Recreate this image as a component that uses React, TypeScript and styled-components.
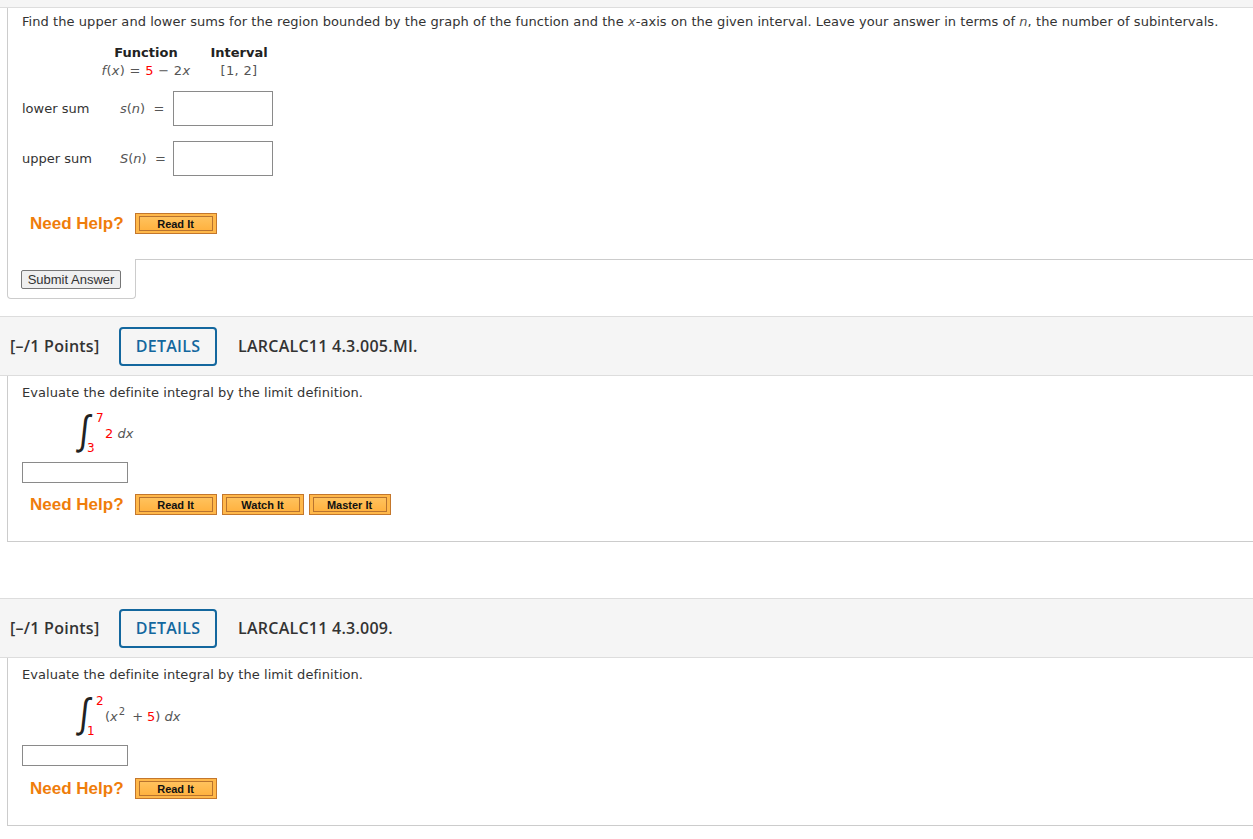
import React from "react";
import styled, { createGlobalStyle } from "styled-components";

const GlobalStyle = createGlobalStyle`
  html, body {
    margin: 0;
    padding: 0;
    background: #fff;
  }
  body {
    font-family: "DejaVu Sans", Verdana, sans-serif;
    font-size: 13px;
    color: #333;
  }
`;

const Page = styled.div`
  width: 1253px;
  display: flex;
  flex-direction: column;
`;

const TopStrip = styled.div`
  height: 7px;
  background: #f5f5f5;
  border-bottom: 1px solid #ddd;
`;

const Body = styled.div<{ $bottom?: boolean }>`
  margin-left: 7px;
  border-left: 1px solid #ccc;
  border-bottom: ${(p) => (p.$bottom ? "1px solid #ccc" : "none")};
  padding: ${(p) => (p.$bottom ? "9px 0 26px 14px" : "6px 0 25px 14px")};
  display: flex;
  flex-direction: column;
`;

const Prompt = styled.div`
  line-height: 16px;
  letter-spacing: 0.06px;
`;

const Math = styled.span`
  font-style: italic;
  color: #555;
`;

const Plain = styled.span`
  font-style: normal;
  color: #555;
`;

const Op = styled.span`
  color: #555;
  margin: 0 4px 0 7px;
`;

const Red = styled.span`
  color: #f00;
  font-style: normal;
`;

const FuncTable = styled.div`
  display: grid;
  grid-template-columns: 114px 72px;
  margin: 15px 0 0 67px;
  row-gap: 2px;
  line-height: 16px;
`;

const FuncHead = styled.div`
  font-weight: bold;
  text-align: center;
  color: #222;
`;

const FuncCell = styled.div`
  text-align: center;
  color: #555;
  letter-spacing: 0.3px;
`;

const SumRow = styled.div<{ $top: number }>`
  display: flex;
  align-items: center;
  margin-top: ${(p) => p.$top}px;
`;

const SumLabel = styled.div`
  width: 98px;
`;

const SumExpr = styled.div`
  width: 53px;
  color: #555;
`;

const AnswerBox = styled.div<{ $w: number; $h: number }>`
  width: ${(p) => p.$w}px;
  height: ${(p) => p.$h}px;
  box-sizing: border-box;
  border: 1px solid #8a8a8a;
  background: #fff;
`;

const HelpRow = styled.div<{ $top: number }>`
  display: flex;
  align-items: center;
  margin: ${(p) => p.$top}px 0 0 8px;
`;

const NeedHelp = styled.span`
  font-family: "Liberation Sans", Arial, sans-serif;
  font-weight: bold;
  font-size: 17px;
  color: #ef7d0b;
  margin-right: 11px;
`;

const HelpButton = styled.span`
  display: inline-flex;
  width: 82px;
  height: 21px;
  box-sizing: border-box;
  border: 1px solid #c4772c;
  padding: 2px 3px;
  background: #ffb84a;
  margin-right: 5px;
`;

const HelpInner = styled.span`
  flex: 1;
  display: flex;
  align-items: center;
  justify-content: center;
  border: 1px solid #b8732f;
  background: linear-gradient(#ffc25d, #ffb240);
  font-family: "Liberation Sans", Arial, sans-serif;
  font-weight: bold;
  font-size: 11px;
  color: #111;
`;

const SubmitRow = styled.div`
  display: flex;
  height: 40px;
`;

const SubmitCell = styled.div`
  margin-left: 7px;
  width: 129px;
  border: 1px solid #ccc;
  border-top: none;
  border-radius: 0 0 4px 4px;
  display: flex;
  align-items: center;
  padding-left: 13px;
  box-sizing: border-box;
`;

const SubmitFill = styled.div`
  flex: 1;
  border-top: 1px solid #ccc;
`;

const SubmitButton = styled.button`
  font-family: "Liberation Sans", Arial, sans-serif;
  font-size: 13px;
  color: #333;
  height: 19px;
  width: 100px;
  padding: 0;
  background: #efefef;
  border: 1px solid #767676;
  border-radius: 2px;
  margin-top: 2px;
`;

const Header = styled.div<{ $gap: number }>`
  margin-top: ${(p) => p.$gap}px;
  height: 60px;
  box-sizing: border-box;
  background: #f5f5f5;
  border-top: 1px solid #ddd;
  border-bottom: 1px solid #ddd;
  display: flex;
  align-items: center;
  padding-left: 10px;
  font-family: "Open Sans", sans-serif;
  font-size: 16px;
  font-weight: 600;
  color: #333;
  letter-spacing: 0.25px;
`;

const Points = styled.span`
  width: 109px;
`;

const DetailsButton = styled.span`
  width: 98px;
  height: 39px;
  box-sizing: border-box;
  border: 2px solid #13679e;
  border-radius: 4px;
  display: flex;
  align-items: center;
  justify-content: center;
  color: #13679e;
  font-weight: 600;
  margin-right: 21px;
`;

const Integral = styled.div<{ $top: number }>`
  display: flex;
  align-items: center;
  margin: ${(p) => p.$top}px 0 0 55px;
  height: 42px;
`;

const SignWrap = styled.span`
  position: relative;
  width: 28px;
  height: 42px;
`;

const Sign = styled.span`
  position: absolute;
  left: 3px;
  top: -3px;
  font-family: "DejaVu Sans ExtraLight", "DejaVu Sans", sans-serif;
  font-weight: 200;
  font-size: 34px;
  line-height: 42px;
  color: #222;
  transform: scale(0.95, 1.2) skewX(-8deg);
  transform-origin: left center;
`;

const Upper = styled.span`
  position: absolute;
  left: 19px;
  top: -1px;
  color: #f00;
  font-size: 12px;
`;

const Lower = styled.span`
  position: absolute;
  left: 10px;
  top: 29px;
  color: #f00;
  font-size: 12px;
`;

const Sup = styled.sup`
  font-size: 10px;
  font-style: normal;
  vertical-align: 6px;
  line-height: 0;
  margin-left: 1px;
`;

const BoxWrap = styled.div<{ $top: number }>`
  margin-top: ${(p) => p.$top}px;
`;

const ReadIt = ({ label = "Read It" }: { label?: string }) => (
  <HelpButton>
    <HelpInner>{label}</HelpInner>
  </HelpButton>
);

export default function App() {
  return (
    <Page>
      <GlobalStyle />
      <TopStrip />
      <Body>
        <Prompt>
          Find the upper and lower sums for the region bounded by the graph of the function and the <Math>x</Math>-axis on the given
          interval. Leave your answer in terms of <Math>n</Math>, the number of subintervals.
        </Prompt>
        <FuncTable>
          <FuncHead>Function</FuncHead>
          <FuncHead>Interval</FuncHead>
          <FuncCell>
            <Math>f</Math>(<Math>x</Math>) = <Red>5</Red> − 2<Math>x</Math>
          </FuncCell>
          <FuncCell>[1, 2]</FuncCell>
        </FuncTable>
        <SumRow $top={12}>
          <SumLabel>lower sum</SumLabel>
          <SumExpr>
            <Math>s</Math>(<Math>n</Math>)&nbsp; =
          </SumExpr>
          <AnswerBox $w={100} $h={35} />
        </SumRow>
        <SumRow $top={15}>
          <SumLabel>upper sum</SumLabel>
          <SumExpr>
            <Math>S</Math>(<Math>n</Math>)&nbsp; =
          </SumExpr>
          <AnswerBox $w={100} $h={35} />
        </SumRow>
        <HelpRow $top={37}>
          <NeedHelp>Need Help?</NeedHelp>
          <ReadIt />
        </HelpRow>
      </Body>
      <SubmitRow>
        <SubmitCell>
          <SubmitButton>Submit Answer</SubmitButton>
        </SubmitCell>
        <SubmitFill />
      </SubmitRow>

      <Header $gap={17}>
        <Points>[–/1 Points]</Points>
        <DetailsButton>DETAILS</DetailsButton>
        <span>LARCALC11 4.3.005.MI.</span>
      </Header>
      <Body $bottom>
        <Prompt>Evaluate the definite integral by the limit definition.</Prompt>
        <Integral $top={11}>
          <SignWrap>
            <Sign>∫</Sign>
            <Upper>7</Upper>
            <Lower>3</Lower>
          </SignWrap>
          <Red>2</Red>
          <Plain>&nbsp;</Plain>
          <Math>dx</Math>
        </Integral>
        <BoxWrap $top={8}>
          <AnswerBox $w={106} $h={21} />
        </BoxWrap>
        <HelpRow $top={11}>
          <NeedHelp>Need Help?</NeedHelp>
          <ReadIt />
          <ReadIt label="Watch It" />
          <ReadIt label="Master It" />
        </HelpRow>
      </Body>

      <Header $gap={56}>
        <Points>[–/1 Points]</Points>
        <DetailsButton>DETAILS</DetailsButton>
        <span>LARCALC11 4.3.009.</span>
      </Header>
      <Body $bottom>
        <Prompt>Evaluate the definite integral by the limit definition.</Prompt>
        <Integral $top={12}>
          <SignWrap>
            <Sign>∫</Sign>
            <Upper>2</Upper>
            <Lower>1</Lower>
          </SignWrap>
          <Plain>(</Plain>
          <Math>
            x<Sup>2</Sup>
          </Math>
          <Op>+</Op>
          <Red>5</Red>
          <Plain>)&nbsp;</Plain>
          <Math>dx</Math>
        </Integral>
        <BoxWrap $top={8}>
          <AnswerBox $w={106} $h={21} />
        </BoxWrap>
        <HelpRow $top={12}>
          <NeedHelp>Need Help?</NeedHelp>
          <ReadIt />
        </HelpRow>
      </Body>
    </Page>
  );
}
